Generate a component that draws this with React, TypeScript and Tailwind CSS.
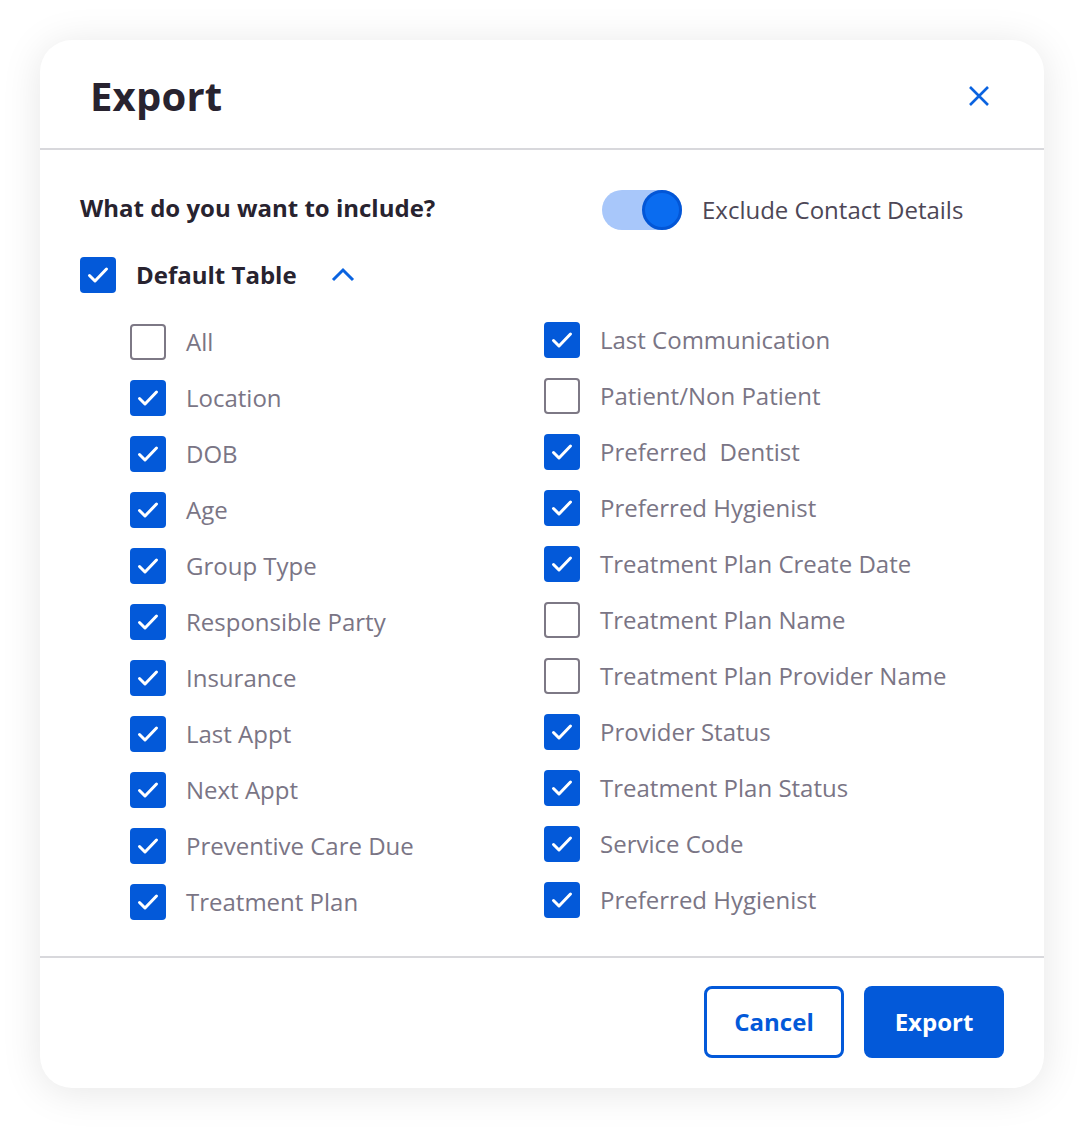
import { useState } from "react";

const LEFT = [
  { label: "All", checked: false },
  { label: "Location", checked: true },
  { label: "DOB", checked: true },
  { label: "Age", checked: true },
  { label: "Group Type", checked: true },
  { label: "Responsible Party", checked: true },
  { label: "Insurance", checked: true },
  { label: "Last Appt", checked: true },
  { label: "Next Appt", checked: true },
  { label: "Preventive Care Due", checked: true },
  { label: "Treatment Plan", checked: true },
];

const RIGHT = [
  { label: "Last Communication", checked: true },
  { label: "Patient/Non Patient", checked: false },
  { label: "Preferred\u00a0 Dentist", checked: true },
  { label: "Preferred Hygienist", checked: true },
  { label: "Treatment Plan Create Date", checked: true },
  { label: "Treatment Plan Name", checked: false },
  { label: "Treatment Plan Provider Name", checked: false },
  { label: "Provider Status", checked: true },
  { label: "Treatment Plan Status", checked: true },
  { label: "Service Code", checked: true },
  { label: "Preferred Hygienist", checked: true },
];

function Box({ checked, onClick }: { checked: boolean; onClick?: () => void }) {
  return (
    <button
      onClick={onClick}
      className={
        "w-9 h-9 shrink-0 rounded-[4px] flex items-center justify-center " +
        (checked ? "bg-[#0359d9]" : "border-2 border-[#7d7885] bg-white")
      }
    >
      {checked && (
        <svg width="24" height="24" viewBox="0 0 24 24" fill="none">
          <path d="M3.5 12.5l5.5 5.5L20.5 6" stroke="white" strokeWidth="3" strokeLinecap="round" strokeLinejoin="round" />
        </svg>
      )}
    </button>
  );
}

function Item({ label, checked }: { label: string; checked: boolean }) {
  const [on, setOn] = useState(checked);
  return (
    <div className="h-14 flex items-center gap-5">
      <Box checked={on} onClick={() => setOn(!on)} />
      <span className="text-[24px] text-[#7a7585] whitespace-pre">{label}</span>
    </div>
  );
}

export default function App() {
  const [exclude, setExclude] = useState(true);
  const [all, setAll] = useState(true);

  return (
    <div
      className="min-h-screen bg-white p-10"
      style={{ fontFamily: '"Open Sans", "Noto Sans", sans-serif' }}
    >
      <div className="w-[1004px] rounded-[32px] bg-white shadow-[0_4px_40px_rgba(0,0,0,0.10)] overflow-hidden">
        {/* header */}
        <div className="h-[108px] flex items-center justify-between pl-[50px] pr-[54px] pt-1">
          <h1 className="text-[40px] font-bold text-[#28232f] tracking-[0.2px]">Export</h1>
          <button className="text-[#0a63e0]">
            <svg width="22" height="22" viewBox="0 0 22 22" fill="none">
              <path d="M2 2l18 18M20 2L2 20" stroke="currentColor" strokeWidth="2.6" />
            </svg>
          </button>
        </div>
        <div className="h-[2px] bg-[#d8d8dc]" />

        {/* body */}
        <div className="px-10 pt-[40px] pb-[26px]">
          <div className="flex items-center">
            <div className="w-[522px] text-[24px] font-bold text-[#28232f] -mt-1">
              What do you want to include?
            </div>
            <button
              onClick={() => setExclude(!exclude)}
              className={
                "relative w-20 h-10 rounded-full flex items-center " +
                (exclude ? "bg-[#a8c7fa] justify-end" : "bg-[#d8d8dc] justify-start")
              }
            >
              <span className="w-10 h-10 rounded-full bg-[#0a6cf0] border-[3px] border-[#0356d6]" />
            </button>
            <span className="ml-5 text-[24px] text-[#4d4756]">Exclude Contact Details</span>
          </div>

          <div className="mt-[27px] flex items-center gap-5">
            <Box checked={all} onClick={() => setAll(!all)} />
            <span className="text-[24px] font-bold text-[#28232f]">Default Table</span>
            <svg className="ml-[14px]" width="24" height="16" viewBox="0 0 24 16" fill="none">
              <path d="M2 13l10-10 10 10" stroke="#0a63e0" strokeWidth="3" />
            </svg>
          </div>

          <div className="mt-[21px] pl-[50px] flex">
            <div className="w-[414px] flex flex-col">
              {LEFT.map((it, i) => (
                <Item key={i} {...it} />
              ))}
            </div>
            <div className="flex flex-col -mt-[2px]">
              {RIGHT.map((it, i) => (
                <Item key={i} {...it} />
              ))}
            </div>
          </div>
        </div>
        <div className="h-[2px] bg-[#d8d8dc]" />

        {/* footer */}
        <div className="flex justify-end gap-5 pt-[28px] pb-[30px] pr-10">
          <button className="w-[140px] h-[72px] rounded-lg border-[3px] border-[#0359d9] text-[#0359d9] text-[24px] font-bold">
            Cancel
          </button>
          <button className="w-[140px] h-[72px] rounded-lg bg-[#0359d9] text-white text-[24px] font-bold">
            Export
          </button>
        </div>
      </div>
    </div>
  );
}
